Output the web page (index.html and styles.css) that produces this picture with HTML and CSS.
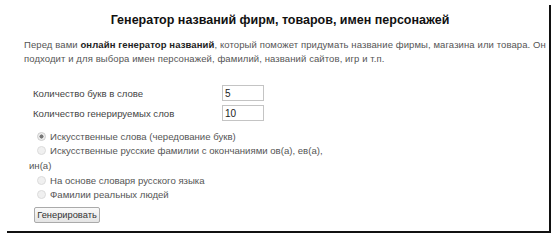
FILE: index.html
```html
<!DOCTYPE html>
<html lang="ru">
<head>
<meta charset="utf-8">
<title>Генератор названий</title>
<link rel="stylesheet" href="styles.css">
</head>
<body>
<div class="page">
  <h1 class="title">Генератор названий фирм, товаров, имен персонажей</h1>
  <p class="intro">Перед вами <b>онлайн генератор названий</b>, который поможет придумать название фирмы, магазина или товара. Он подходит и для выбора имен персонажей, фамилий, названий сайтов, игр и т.п.</p>
  <form class="gen">
    <div class="fields">
      <label class="field-label" for="letters">Количество букв в слове</label>
      <input class="field-input" id="letters" type="text" value="5">
      <label class="field-label" for="words">Количество генерируемых слов</label>
      <input class="field-input" id="words" type="text" value="10">
    </div>
    <div class="options">
      <label class="opt"><input class="radio" type="radio" name="mode" checked>Искусственные слова (чередование букв)</label>
      <label class="opt"><input class="radio" type="radio" name="mode">Искусственные русские фамилии с окончаниями ов(а), ев(а), ин(а)</label>
      <label class="opt"><input class="radio" type="radio" name="mode">На основе словаря русского языка</label>
      <label class="opt"><input class="radio" type="radio" name="mode">Фамилии реальных людей</label>
    </div>
    <button class="btn" type="button">Генерировать</button>
  </form>
</div>
</body>
</html>
```
FILE: styles.css
```css
html, body {
  margin: 0;
  padding: 0;
  background: #fff;
}
body {
  font-family: "Liberation Sans", Arial, sans-serif;
  width: 557px;
  height: 241px;
  overflow: hidden;
}
.page {
  position: relative;
  width: 525px;
  height: 231px;
  padding: 0 0 0 24px;
  background: #fff;
}
.page::after {
  content: "";
  position: absolute;
  top: 5px;
  left: 7px;
  right: -2px;
  bottom: -2px;
  border-right: 2px solid #111;
  border-bottom: 2px solid #111;
  pointer-events: none;
}
.title {
  margin: 0;
  padding: 12px 13px 0 0;
  font-size: 12.5px;
  line-height: 16px;
  font-weight: bold;
  color: #111;
  text-align: center;
}
.intro {
  margin: 10px 0 0 0;
  font-size: 9.5px;
  line-height: 14px;
  letter-spacing: 0.1px;
  color: #555;
}
.intro b {
  color: #222;
}
.gen {
  margin: 19px 0 0 5px;
}
.fields {
  display: grid;
  grid-template-columns: 189px 42px;
  row-gap: 4px;
  align-items: center;
  padding-left: 4px;
}
.field-label {
  font-size: 9.6px;
  color: #444;
}
.field-input {
  box-sizing: border-box;
  width: 42px;
  height: 16px;
  margin: 0;
  padding: 0 2px;
  border: 1px solid #c4c4c4;
  font-family: inherit;
  font-size: 10px;
  color: #222;
  outline: none;
}
.options {
  width: 300px;
  margin-top: 8.6px;
  font-size: 9.6px;
  line-height: 14.7px;
  color: #555;
}
.opt {
  display: block;
}
.radio {
  appearance: none;
  -webkit-appearance: none;
  box-sizing: border-box;
  width: 9px;
  height: 9px;
  margin: 0 4px 0 8px;
  vertical-align: -1px;
  border-radius: 50%;
  border: 1px solid #dcdcdc;
  background: #f0f0f0;
}
.radio:checked {
  background: radial-gradient(circle, #777 0 1.8px, #eee 2.3px);
  border-color: #ccc;
}
.btn {
  display: block;
  box-sizing: border-box;
  margin: 4px 0 0 5px;
  width: 66px;
  height: 16px;
  padding: 0;
  font-family: inherit;
  font-size: 9.3px;
  color: #333;
  border: 1px solid #aaa;
  border-radius: 2px;
  background: linear-gradient(#fafafa, #e4e4e4);
}
```
